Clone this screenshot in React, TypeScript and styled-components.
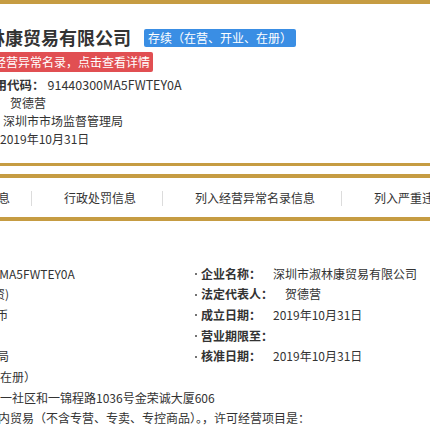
import { createGlobalStyle, styled } from "styled-components";

const gold = "#c69c42";
const text = "#333333";

const GlobalStyle = createGlobalStyle`
  html, body {
    margin: 0;
    padding: 0;
    background: #ffffff;
    overflow: hidden;
  }
  body {
    font-family: "Noto Sans CJK SC", "Noto Sans", sans-serif;
    color: ${text};
  }
`;

// the page is wider than the window, we only see a slice of it
const Page = styled.div`
  width: 900px;
  margin-left: -200px;
`;

const TopBar = styled.div`
  height: 4px;
  background: ${gold};
`;

const Summary = styled.section`
  padding: 23px 0 0 112px;
`;

const TitleRow = styled.div`
  display: flex;
  align-items: center;
  gap: 13px;
  height: 21px;
  padding-left: 3px;
`;

const Title = styled.h1`
  margin: 0;
  font-size: 18px;
  line-height: 21px;
  font-weight: 700;
  color: ${text};
`;

const StatusBadge = styled.span`
  display: inline-block;
  padding: 0 4px;
  border-radius: 2px;
  background: #3a8ee4;
  color: #ffffff;
  font-size: 12px;
  line-height: 18px;
`;

const AlertBanner = styled.a`
  display: inline-block;
  margin: 4px 0 0 7px;
  padding: 0 3px;
  border-radius: 2px;
  background: #e14f52;
  color: #ffffff;
  font-size: 12px;
  line-height: 20px;
  text-decoration: none;
`;

const InfoList = styled.dl`
  margin: 4px 0 0 20px;
  font-size: 12px;
  line-height: 18px;
`;

const InfoRow = styled.div<{ $gap: number; $big?: boolean }>`
  display: flex;

  dt {
    font-weight: 700;
    font-size: ${({ $big }) => ($big ? "12.5px" : "12px")};
  }
  dd {
    margin: 0 0 0 ${({ $gap }) => $gap}px;
    font-size: ${({ $big }) => ($big ? "12.5px" : "12px")};
  }
`;

const Rule = styled.hr`
  margin: 15px 0 0;
  border: 0;
  height: 3px;
  background: ${gold};
`;

const Tabs = styled.ul`
  display: flex;
  margin: 8px 0 0;
  padding: 0 0 0 106px;
  list-style: none;
  height: 39px;
  border-top: 4px solid ${gold};
  border-bottom: 4px solid ${gold};
`;

const Tab = styled.li`
  position: relative;
  display: flex;
  align-items: center;
  padding: 0 27px 0 32px;
  font-size: 12px;
  color: ${text};
  white-space: nowrap;

  &:first-child {
    padding-right: 22px;
  }

  &:not(:last-child)::after {
    content: "";
    position: absolute;
    right: 0;
    top: 13px;
    height: 15px;
    width: 1px;
    background: #dcdcdc;
  }
`;

const Details = styled.section`
  display: grid;
  grid-template-columns: 381px 1fr;
  margin-top: 42.5px;
  padding-left: 14px;
  font-size: 12px;
  line-height: 20.7px;
`;

const Column = styled.ul<{ $wide?: boolean }>`
  margin: 0;
  padding: 0;
  list-style: none;
  grid-column: ${({ $wide }) => ($wide ? "1 / -1" : "auto")};
`;

const Item = styled.li`
  display: flex;
  align-items: center;
  white-space: nowrap;
`;

const Bullet = styled.span`
  width: 2px;
  height: 2px;
  margin: 0 4px 0 0;
  border-radius: 50%;
  background: #444;
`;

const Label = styled.span`
  font-weight: 700;
`;

const Value = styled.span<{ $gap: number }>`
  margin-left: ${({ $gap }) => $gap}px;
`;

const summaryRows = [
  { label: "统一社会信用代码：", value: "91440300MA5FWTEY0A", gap: 3, big: true },
  { label: "法定代表人：", value: "贺德营", gap: 6 },
  { label: "登记机关：", value: "深圳市市场监督管理局", gap: 11 },
  { label: "成立日期：", value: "2019年10月31日", gap: 8 },
];

const tabs = ["营业执照信息", "行政处罚信息", "列入经营异常名录信息", "列入严重违法失信企业名单（黑名单）信息"];

type Entry = [string, string, number?];

const leftItems: Entry[] = [
  ["统一社会信用代码：", "91440300MA5FWTEY0A", 18],
  ["类型：", "有限责任公司(自然人独资)", 13],
  ["注册资本：", "100.000000万人民币", 17],
  ["营业期限自：", "2019年10月31日"],
  ["登记机关：", "深圳市市场监督管理局", 9],
  ["登记状态：", "存续（在营、开业、在册）"],
];

const rightItems: Entry[] = [
  ["企业名称：", "深圳市淑林康贸易有限公司"],
  ["法定代表人：", "贺德营"],
  ["成立日期：", "2019年10月31日"],
  ["营业期限至：", ""],
  ["核准日期：", "2019年10月31日"],
];

const wideItems: Entry[] = [
  ["住所：", "深圳市罗湖区东湖街道大望一社区和一锦程路1036号金荣诚大厦606", 0],
  ["经营范围：", "一般经营项目是：国内贸易（不含专营、专卖、专控商品）。，许可经营项目是：", 10],
];

const List = ({ items, wide }: { items: Entry[]; wide?: boolean }) => (
  <Column $wide={wide}>
    {items.map(([label, value, gap = 12]) => (
      <Item key={label}>
        <Bullet />
        <Label>{label}</Label>
        <Value $gap={gap}>{value}</Value>
      </Item>
    ))}
  </Column>
);

const App = () => (
  <>
    <GlobalStyle />
    <Page>
      <TopBar />
      <Summary>
        <TitleRow>
          <Title>深圳市淑林康贸易有限公司</Title>
          <StatusBadge>存续（在营、开业、在册）</StatusBadge>
        </TitleRow>
        <AlertBanner>该企业已列入经营异常名录，点击查看详情</AlertBanner>
        <InfoList>
          {summaryRows.map(({ label, value, gap, big }) => (
            <InfoRow key={label} $gap={gap} $big={big}>
              <dt>{label}</dt>
              <dd>{value}</dd>
            </InfoRow>
          ))}
        </InfoList>
      </Summary>
      <Rule />
      <Tabs>
        {tabs.map((t) => (
          <Tab key={t}>{t}</Tab>
        ))}
      </Tabs>
      <Details>
        <List items={leftItems} />
        <List items={rightItems} />
        <List items={wideItems} wide />
      </Details>
    </Page>
  </>
);

export default App;
